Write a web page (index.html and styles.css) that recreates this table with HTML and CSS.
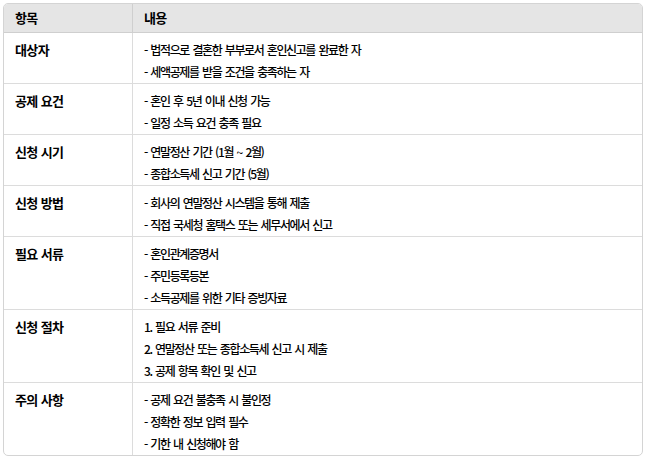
FILE: index.html
```html
<!DOCTYPE html>
<html lang="ko">
<head>
<meta charset="utf-8">
<link rel="stylesheet" href="styles.css">
</head>
<body>
<table class="info">
  <thead>
    <tr><th class="col-key">항목</th><th>내용</th></tr>
  </thead>
  <tbody>
    <tr><td class="key">대상자</td><td><div class="ln">- 법적으로 결혼한 부부로서 혼인신고를 완료한 자</div><div class="ln">- 세액공제를 받을 조건을 충족하는 자</div></td></tr>
    <tr><td class="key">공제 요건</td><td><div class="ln">- 혼인 후 5년 이내 신청 가능</div><div class="ln">- 일정 소득 요건 충족 필요</div></td></tr>
    <tr><td class="key">신청 시기</td><td><div class="ln">- 연말정산 기간 (1월 ~ 2월)</div><div class="ln">- 종합소득세 신고 기간 (5월)</div></td></tr>
    <tr><td class="key">신청 방법</td><td><div class="ln">- 회사의 연말정산 시스템을 통해 제출</div><div class="ln">- 직접 국세청 홈택스 또는 세무서에서 신고</div></td></tr>
    <tr><td class="key">필요 서류</td><td><div class="ln">- 혼인관계증명서</div><div class="ln">- 주민등록등본</div><div class="ln">- 소득공제를 위한 기타 증빙자료</div></td></tr>
    <tr><td class="key">신청 절차</td><td><div class="ln">1. 필요 서류 준비</div><div class="ln">2. 연말정산 또는 종합소득세 신고 시 제출</div><div class="ln">3. 공제 항목 확인 및 신고</div></td></tr>
    <tr class="last"><td class="key">주의 사항</td><td><div class="ln">- 공제 요건 불충족 시 불인정</div><div class="ln">- 정확한 정보 입력 필수</div><div class="ln">- 기한 내 신청해야 함</div></td></tr>
  </tbody>
</table>
</body>
</html>
```
FILE: styles.css
```css
html, body {
  margin: 0;
  padding: 0;
  background: #ffffff;
}
body {
  padding: 3px 4px 0 3px;
  font-family: "Noto Sans CJK KR", "Liberation Sans", sans-serif;
  font-size: 12px;
  font-weight: 500;
  letter-spacing: -1.4px;
  word-spacing: 1.5px;
  color: #000000;
}
.info {
  width: 640px;
  border-collapse: separate;
  border-spacing: 0;
  border: 1px solid #d4d4d4;
  border-radius: 5px;
  overflow: hidden;
}
.info th {
  background: #e5e5e5;
  text-align: left;
  font-size: 13px;
  font-weight: bold;
  letter-spacing: -0.6px;
  word-spacing: 0;
  height: 28px;
  padding: 0 11px;
  border-bottom: 1px solid #cfcfcf;
  line-height: 20px;
}
.info th.col-key {
  width: 106px;
  border-right: 1px solid #cfcfcf;
}
.info td {
  vertical-align: top;
  padding: 6px 11px 0;
  line-height: 22px;
  border-bottom: 1px solid #dcdcdc;
}
.info td.key {
  font-size: 13px;
  font-weight: bold;
  letter-spacing: -0.6px;
  word-spacing: 0;
  border-right: 1px solid #dcdcdc;
}
.info tr.last td {
  border-bottom: none;
}
.ln {
  white-space: nowrap;
}
```
